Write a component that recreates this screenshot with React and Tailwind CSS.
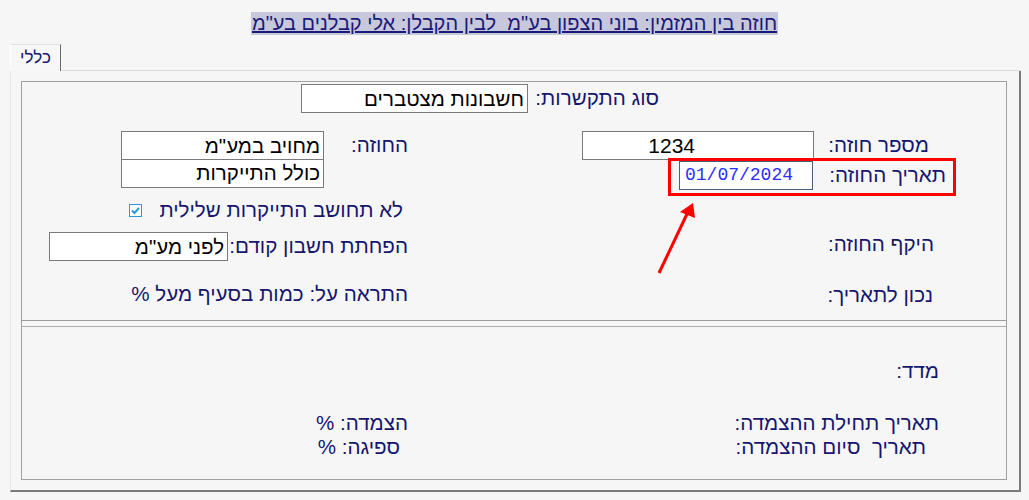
import React from "react";

const Label = ({ children, className = "" }) => (
  <div className={`text-[#16166e] text-[20.6px] leading-[28px] whitespace-nowrap ${className}`}>{children}</div>
);

export default function App() {
  return (
    <div className="relative w-[1029px] h-[500px] bg-[#f6f6f6] overflow-hidden font-['Liberation_Sans',sans-serif]">
      {/* Title */}
      <div className="flex justify-center pt-[12px]" dir="rtl">
        <span className="bg-[#c8c8dc] text-[#1a1a78] underline text-[20px] leading-[23px] whitespace-pre px-[1px]">
          {'חוזה בין המזמין: בוני הצפון בע"מ  לבין הקבלן: אלי קבלנים בע"מ'}
        </span>
      </div>

      {/* Tabs */}
      <div className="ml-[10px] mt-[9px] w-[1011px]">
        <div className="flex h-[27px]">
          <div className="w-[51px] h-[27px] border-l border-t border-r border-l-[#ffffff] border-t-[#e2e2e2] border-r-[#6a6a6a] bg-[#f7f7f7] flex items-center justify-center">
            <span className="text-[#16166e] text-[17px] leading-[20px]" dir="rtl">כללי</span>
          </div>
          <div className="flex-1 border-b border-b-[#dedede]"></div>
        </div>
        <div className="h-[421px] border-l border-l-[#e6e6e6] border-r-2 border-r-[#7a7a7a] border-b-2 border-b-[#7a7a7a] pl-[10px] pt-[10px]">
          {/* Inner frame */}
          <div className="w-[986px] h-[399px] border border-[#a0a0a0]" dir="rtl">
            <div className="h-[236px]">
              {/* Row 1 */}
              <div className="flex mt-[2px] pr-[347px] h-[28px]">
                <Label className="w-[131px]">סוג התקשרות:</Label>
                <div className="w-[227px] h-[29px] border border-[#7a7a7a] bg-white text-black text-[20.5px] leading-[27px] pr-[3px] whitespace-nowrap">
                  חשבונות מצטברים
                </div>
              </div>

              {/* Two columns */}
              <div className="flex mt-[19px]">
                {/* Right column */}
                <div className="w-[478px]">
                  <div className="flex pr-[77px] h-[28px]">
                    <Label className="w-[115px]">מספר חוזה:</Label>
                    <div className="w-[232px] h-[29px] border border-[#7a7a7a] bg-white text-black text-[21px] leading-[27px] pr-[118px]">
                      1234
                    </div>
                  </div>
                  <div className="flex pr-[60px] h-[28px] mt-[2px]">
                    <Label className="w-[133px]">תאריך החוזה:</Label>
                    <div className="w-[134px] h-[29px] border border-[#45627f] bg-white text-[#2c2cff] text-[18px] leading-[27px] pl-[5px] font-['Liberation_Mono',monospace]" dir="ltr">
                      01/07/2024
                    </div>
                  </div>
                  <div className="flex pr-[72px] mt-[41px]">
                    <Label>היקף החוזה:</Label>
                  </div>
                  <div className="flex pr-[73px] mt-[23px]">
                    <Label>נכון לתאריך:</Label>
                  </div>
                </div>

                {/* Left column */}
                <div className="flex-1">
                  <div className="flex pr-[120px]">
                    <Label className="w-[84px]">החוזה:</Label>
                    <div className="w-[203px] border border-[#7a7a7a] bg-white text-black text-[20.5px] whitespace-nowrap">
                      <div className="h-[28px] leading-[27px] pr-[3px] border-b border-b-[#7a7a7a]">מחויב במע"מ</div>
                      <div className="h-[27px] leading-[26px] pr-[3px]">כולל התייקרות</div>
                    </div>
                  </div>
                  <div className="flex items-center pr-[125px] mt-[8px] h-[28px]">
                    <Label className="w-[242px]">לא תחושב התייקרות שלילית</Label>
                    <svg className="mr-[19px]" width="13" height="13" viewBox="0 0 13 13">
                      <rect x="0.5" y="0.5" width="12" height="12" fill="white" stroke="#2f95dc" />
                      <path d="M3 6.5 L5.5 9 L10 4" fill="none" stroke="#2f95dc" strokeWidth="2" />
                    </svg>
                  </div>
                  <div className="flex pr-[120px] mt-[8px] h-[28px]">
                    <Label className="w-[180px]">הפחתת חשבון קודם:</Label>
                    <div className="w-[179px] h-[29px] border border-[#7a7a7a] bg-white text-black text-[20.5px] leading-[27px] pr-[3px] whitespace-nowrap">
                      לפני מע"מ
                    </div>
                  </div>
                  <div className="flex pr-[120px] mt-[20px]">
                    <Label>התראה על: כמות בסעיף מעל %</Label>
                  </div>
                </div>
              </div>
            </div>

            {/* Separator */}
            <div className="border-t border-t-[#9c9c9c]"></div>
            <div className="mt-[5px] border-t border-t-[#acacac]"></div>

            {/* Bottom section */}
            <div className="pr-[67px] mt-[30px]">
              <Label>מדד:</Label>
            </div>
            <div className="flex mt-[24px] h-[24px]">
              <div className="w-[478px] pr-[67px]">
                <Label className="leading-[24px]">תאריך תחילת ההצמדה:</Label>
              </div>
              <div className="pr-[120px]">
                <Label className="leading-[24px]">הצמדה: %</Label>
              </div>
            </div>
            <div className="flex h-[24px]">
              <div className="w-[478px] pr-[80px]">
                <Label className="leading-[24px]">{"תאריך\u00a0\u00a0סיום ההצמדה:"}</Label>
              </div>
              <div className="pr-[128px]">
                <Label className="leading-[24px]">ספיגה: %</Label>
              </div>
            </div>
          </div>
        </div>
      </div>

      {/* Annotation overlay */}
      <div className="absolute left-[668px] top-[158px] w-[288px] h-[38px] border-[3px] border-[#ff0000] pointer-events-none"></div>
      <svg className="absolute left-0 top-0 pointer-events-none" width="1029" height="500">
        <line x1="659" y1="273" x2="687" y2="214" stroke="#ff0000" strokeWidth="3" />
        <polygon points="693,203 680,212 695,218" fill="#ff0000" />
      </svg>
    </div>
  );
}
